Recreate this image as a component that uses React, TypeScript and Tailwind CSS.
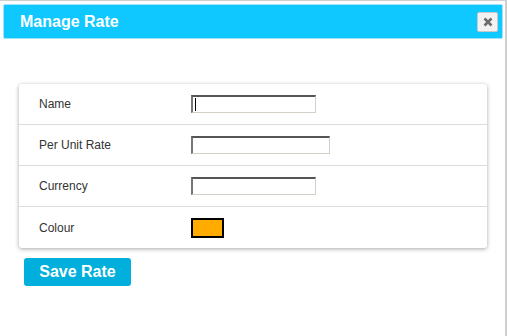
import React from "react";

function Field({ w, caret }: { w: string; caret?: boolean }) {
  return (
    <div
      className={`${w} h-[18px] bg-white border-t-2 border-l-2 border-t-[#555] border-l-[#777] border-b border-r border-b-[#d4d0c8] border-r-[#d4d0c8] flex items-center`}
    >
      {caret ? <div className="ml-[2px] w-[1px] h-[13px] bg-black" /> : null}
    </div>
  );
}

function Row({ label, children, last }: { label: string; children: React.ReactNode; last?: boolean }) {
  return (
    <div className={`h-[41px] flex items-center pl-[20px] ${last ? "" : "border-b border-[#dcdcdc]"}`}>
      <div className="w-[152px] text-[12px] text-[#333]">{label}</div>
      {children}
    </div>
  );
}

export default function App() {
  return (
    <div
      className="w-[507px] h-[336px] bg-white overflow-hidden"
      style={{ fontFamily: '"Liberation Sans", Arial, sans-serif' }}
    >
      <div className="w-[507px] h-[336px] border-t border-t-[#d0d0d0] border-r-2 border-r-[#cfcfcf]">
        <div className="ml-[3px] mr-[2px] mt-[3px] h-[35px] bg-[#0ec8ff] border border-[#9fe3fa] rounded-[2px] flex items-center justify-between pl-[16px] pr-[4px]">
          <span className="text-white font-bold text-[16px] leading-[18px]">Manage Rate</span>
          <div className="w-[21px] h-[20px] bg-[#f2f2f2] border border-[#c8c8c8] rounded-[2px] flex items-center justify-center">
            <svg width="10" height="10" viewBox="0 0 10 10">
              <path d="M1.5 1.5 L8.5 8.5 M8.5 1.5 L1.5 8.5" stroke="#6b6b6b" strokeWidth="2.6" strokeLinecap="butt" />
            </svg>
          </div>
        </div>

        <div className="ml-[19px] mt-[45px] w-[468px] bg-white rounded-[3px] shadow-[0_1px_4px_rgba(0,0,0,0.35)]">
          <Row label="Name">
            <Field w="w-[125px]" caret />
          </Row>
          <Row label="Per Unit Rate">
            <Field w="w-[139px]" />
          </Row>
          <Row label="Currency">
            <Field w="w-[125px]" />
          </Row>
          <Row label="Colour" last>
            <div className="w-[33px] h-[20px] bg-[#ffab00] border-2 border-black" />
          </Row>
        </div>

        <button className="ml-[24px] mt-[10px] w-[107px] h-[28px] bg-[#00afdb] rounded-[3px] text-white font-bold text-[16px] flex items-center justify-center">
          Save Rate
        </button>
      </div>
    </div>
  );
}
